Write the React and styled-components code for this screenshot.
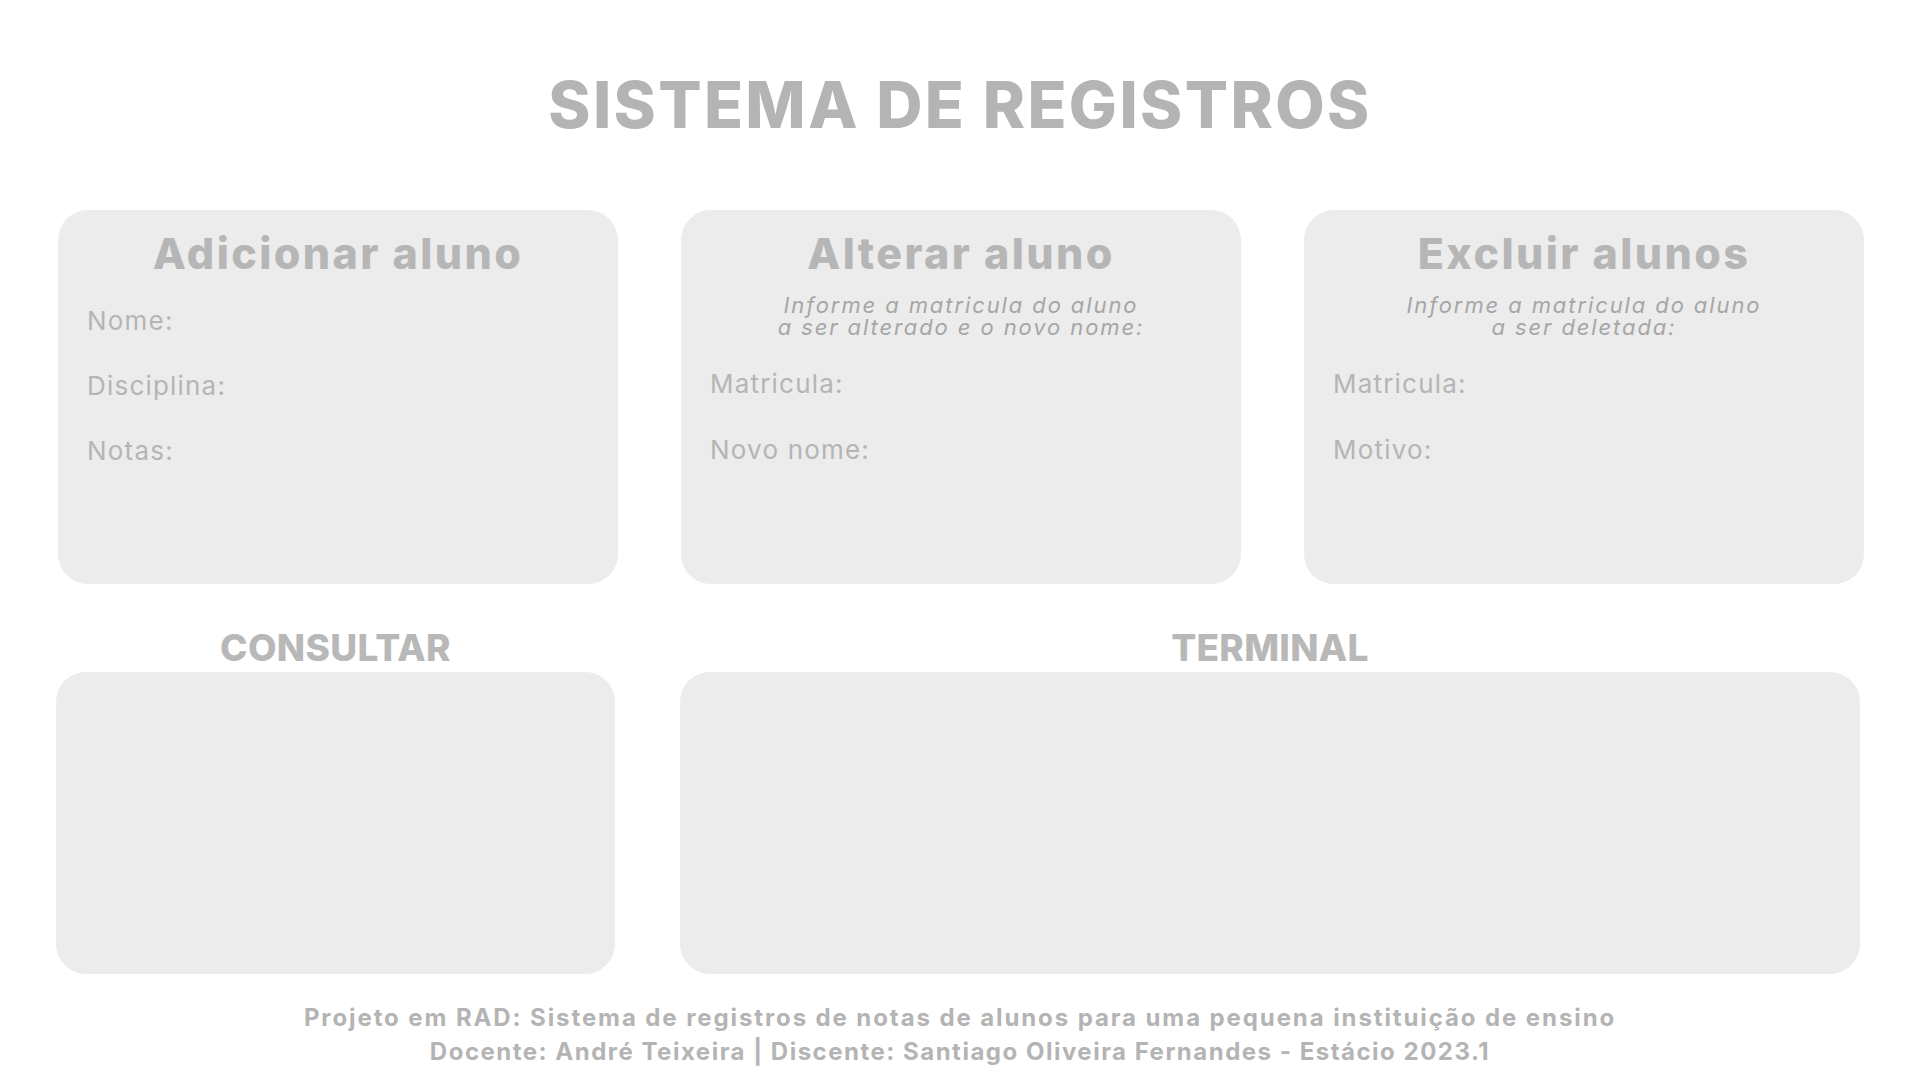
import React from 'react';
import styled, { createGlobalStyle } from 'styled-components';

const GlobalStyle = createGlobalStyle`
  html, body {
    margin: 0;
    padding: 0;
    background: #ffffff;
  }
  body {
    font-family: Inter, "Open Sans", sans-serif;
  }
`;

const cards = [
  {
    title: 'Adicionar aluno',
    fields: ['Nome:', 'Disciplina:', 'Notas:'],
  },
  {
    title: 'Alterar aluno',
    hint: 'Informe a matricula do aluno\na ser alterado e o novo nome:',
    fields: ['Matricula:', 'Novo nome:'],
  },
  {
    title: 'Excluir alunos',
    hint: 'Informe a matricula do aluno\na ser deletada:',
    fields: ['Matricula:', 'Motivo:'],
  },
];

const ActionCard = (props) => {
  return (
    <Card>
      <CardTitle>{props.title}</CardTitle>
      {props.hint && <Hint>{props.hint}</Hint>}
      <Fields hasHint={!!props.hint}>
        {props.fields.map((field, i) => (
          <Label key={i}>{field}</Label>
        ))}
      </Fields>
    </Card>
  );
};

const App = () => {
  return (
    <Page>
      <GlobalStyle />
      <Title>SISTEMA DE REGISTROS</Title>
      <TopRow>
        {cards.map((card, i) => (
          <ActionCard key={i} title={card.title} hint={card.hint} fields={card.fields} />
        ))}
      </TopRow>
      <BottomRow>
        <Section>
          <SectionTitle>CONSULTAR</SectionTitle>
          <Panel />
        </Section>
        <Section>
          <SectionTitle>TERMINAL</SectionTitle>
          <Panel />
        </Section>
      </BottomRow>
      <Footer>
        <FooterLine spacing={1.9}>
          Projeto em RAD: Sistema de registros de notas de alunos para uma pequena instituição de ensino
        </FooterLine>
        <FooterLine spacing={1.5}>
          Docente: André Teixeira | Discente: Santiago Oliveira Fernandes - Estácio 2023.1
        </FooterLine>
      </Footer>
    </Page>
  );
};

const Page = styled.div`
  width: 1920px;
  height: 1080px;
  overflow: hidden;
  display: flex;
  flex-direction: column;
  align-items: stretch;
  color: #b4b4b4;
`;

const Title = styled.h1`
  margin: 73px 0 0 0;
  text-align: center;
  font-size: 64px;
  line-height: 64px;
  font-weight: 800;
  letter-spacing: 2.4px;
  color: #b4b4b4;
`;

const TopRow = styled.div`
  display: grid;
  grid-template-columns: 560px 560px 560px;
  column-gap: 63px;
  padding-left: 58px;
  margin-top: 73px;
`;

const Card = styled.div`
  height: 374px;
  box-sizing: border-box;
  background: #ececec;
  border-radius: 30px;
  padding: 17px 29px 0 29px;
  display: flex;
  flex-direction: column;
`;

const CardTitle = styled.div`
  text-align: center;
  font-size: 43px;
  line-height: 52px;
  font-weight: 800;
  letter-spacing: 2.4px;
  color: #b6b6b6;
`;

const Hint = styled.p`
  margin: 15px 0 0 0;
  text-align: center;
  white-space: pre-line;
  font-size: 22px;
  line-height: 22px;
  font-style: italic;
  letter-spacing: 1.9px;
  color: #a6a6a6;
`;

const Fields = styled.div`
  display: flex;
  flex-direction: column;
  gap: ${({ hasHint }) => (hasHint ? '34px' : '33px')};
  margin-top: ${({ hasHint }) => (hasHint ? '30px' : '26px')};
`;

const Label = styled.div`
  font-size: 26px;
  line-height: 32px;
  font-weight: 400;
  letter-spacing: 1.2px;
  color: #b5b5b5;
`;

const BottomRow = styled.div`
  display: grid;
  grid-template-columns: 559px 1180px;
  column-gap: 65px;
  padding-left: 56px;
  margin-top: 42px;
`;

const Section = styled.div`
  display: flex;
  flex-direction: column;
`;

const SectionTitle = styled.div`
  text-align: center;
  font-size: 37px;
  line-height: 44px;
  font-weight: 800;
  letter-spacing: 0.3px;
  color: #b8b8b8;
`;

const Panel = styled.div`
  height: 302px;
  margin-top: 2px;
  background: #ececec;
  border-radius: 30px;
`;

const Footer = styled.div`
  margin-top: 27px;
  display: flex;
  flex-direction: column;
  align-items: center;
`;

const FooterLine = styled.div`
  font-size: 24px;
  line-height: 34px;
  font-weight: 700;
  letter-spacing: ${({ spacing }) => spacing}px;
  color: #b4b4b4;
  white-space: nowrap;
`;

export default App;
